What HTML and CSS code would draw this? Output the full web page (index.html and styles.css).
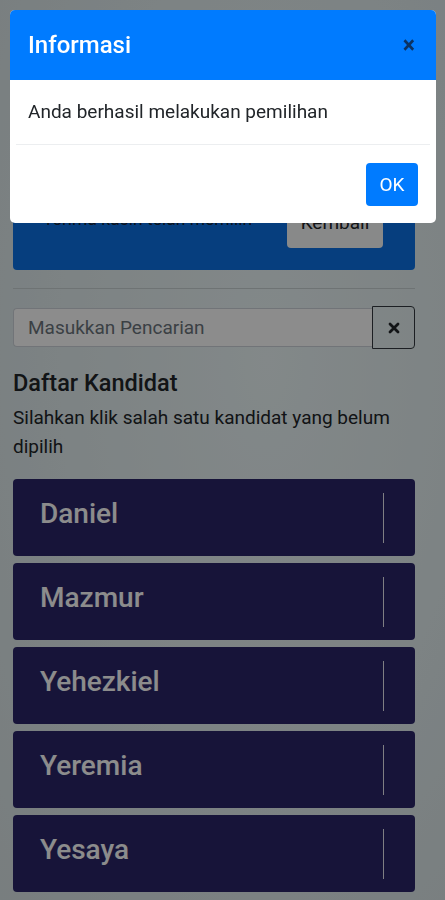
FILE: index.html
```html
<!DOCTYPE html>
<html>
<head>
	<meta charset="utf-8">
	<title>Pemilihan Kandidat</title>
	<link rel="stylesheet" href="styles.css">
</head>
<body>
<div class="page">
	<!-- kartu status pemilih (sebagian tertutup modal) -->
	<div class="status-card">
		<div class="status-row">
			<span class="status-text">Terima kasih telah memilih</span>
			<button class="btn-light" type="button">Kembali</button>
		</div>
	</div>
	<hr class="divider">

	<!-- pencarian -->
	<div class="search-group">
		<input class="search-input" type="text" placeholder="Masukkan Pencarian">
		<button class="btn-clear" type="button" aria-label="hapus">
			<svg width="12" height="12" viewBox="0 0 12 12"><path d="M2 2L10 10M10 2L2 10" stroke="#23272b" stroke-width="2.8" stroke-linecap="round"/></svg>
		</button>
	</div>

	<h3 class="list-title">Daftar Kandidat</h3>
	<p class="list-help">Silahkan klik salah satu kandidat yang belum dipilih</p>

	<div class="candidates">
		<div class="candidate"><span class="candidate-name">Daniel</span><span class="candidate-sep"></span></div>
		<div class="candidate"><span class="candidate-name">Mazmur</span><span class="candidate-sep"></span></div>
		<div class="candidate"><span class="candidate-name">Yehezkiel</span><span class="candidate-sep"></span></div>
		<div class="candidate"><span class="candidate-name">Yeremia</span><span class="candidate-sep"></span></div>
		<div class="candidate"><span class="candidate-name">Yesaya</span><span class="candidate-sep"></span></div>
	</div>
</div>

<!-- modal informasi -->
<div class="backdrop"></div>
<div class="modal">
	<div class="modal-header">
		<h5 class="modal-title">Informasi</h5>
		<button class="close" type="button">&times;</button>
	</div>
	<div class="modal-body">Anda berhasil melakukan pemilihan</div>
	<div class="modal-footer">
		<button class="btn-primary" type="button">OK</button>
	</div>
</div>
</body>
</html>
```

FILE: styles.css
```css
body {
	margin: 0;
	font-family: Roboto, "Noto Sans", "Liberation Sans", sans-serif;
	color: #212529;
	background: radial-gradient(ellipse at 60% 40%, #eef8f9 0%, #e2edef 60%, #dbe5e7 100%);
	min-height: 900px;
}
button {
	font-family: inherit;
}
.page {
	width: 402px;
	margin-left: 13px;
	padding-top: 30px;
}

/* kartu biru di atas */
.status-card {
	height: 240px;
	box-sizing: border-box;
	background: #0b72e6;
	border-radius: 4px;
	padding: 20px 32px 22px 30px;
	display: flex;
	flex-direction: column;
	justify-content: flex-end;
}
.status-row {
	display: flex;
	align-items: center;
	justify-content: space-between;
}
.status-text {
	font-size: 17.5px;
	color: #1a2433;
	margin-top: -7px;
}
.btn-light {
	width: 96px;
	height: 52px;
	border: 0;
	border-radius: 4px;
	background: #f8f9fa;
	color: #212529;
	font-size: 19px;
}
.divider {
	margin: 18px 0 0;
	border: 0;
	border-top: 1px solid #c9d2d4;
}

/* pencarian */
.search-group {
	display: flex;
	align-items: center;
	margin-top: 17px;
}
.search-input {
	width: 359px;
	height: 39px;
	box-sizing: border-box;
	border: 1px solid #ced4da;
	border-right: 0;
	border-radius: 4px 0 0 4px;
	padding: 0 14px;
	font: 19px Roboto, "Liberation Sans", sans-serif;
	background: #fff;
}
.search-input::placeholder {
	color: #6c757d;
}
.btn-clear {
	width: 43px;
	height: 43px;
	box-sizing: border-box;
	border: 1px solid #343a40;
	border-radius: 0 4px 4px 0;
	background: transparent;
	display: flex;
	align-items: center;
	justify-content: center;
	padding: 0;
}

.list-title {
	margin: 20px 0 0;
	font-size: 23.5px;
	font-weight: 500;
	line-height: 1.2;
}
.list-help {
	margin: 7px 0 0;
	font-size: 19px;
	line-height: 1.52;
}

/* daftar kandidat */
.candidates {
	margin-top: 17px;
	display: flex;
	flex-direction: column;
	gap: 7px;
}
.candidate {
	height: 77px;
	box-sizing: border-box;
	background: #2a2669;
	border-radius: 4px;
	padding: 14px 0;
	display: flex;
	justify-content: space-between;
}
.candidate-name {
	padding: 4px 0 0 27px;
	font-size: 28px;
	font-weight: 500;
	line-height: 1.2;
	color: #fff;
}
.candidate-sep {
	width: 1px;
	height: 50px;
	background: #e8e8ee;
	margin-right: 31px;
}

/* modal */
.backdrop {
	position: fixed;
	top: 0;
	left: 0;
	right: 0;
	bottom: 0;
	background: rgba(0, 0, 0, .45);
}
.modal {
	position: fixed;
	top: 10px;
	left: 10px;
	width: 426px;
	background: #fff;
	border-radius: 5px;
	overflow: hidden;
}
.modal-header {
	background: #007bff;
	padding: 17px 18px;
	display: flex;
	align-items: center;
	justify-content: space-between;
}
.modal-title {
	margin: 0;
	font-size: 24px;
	font-weight: 500;
	line-height: 1.5;
	color: #fff;
}
.close {
	border: 0;
	background: transparent;
	padding: 0 3px 0 0;
	font-size: 23px;
	font-weight: 700;
	line-height: 1;
	color: #0b3262;
}
.modal-body {
	padding: 19px 18px 18px;
	font-size: 19px;
	line-height: 1.42;
}
.modal-footer {
	margin: 0 6px;
	border-top: 1px solid #eceef0;
	padding: 18px 12px 17px;
	display: flex;
	justify-content: flex-end;
}
.btn-primary {
	width: 52px;
	height: 43px;
	border: 0;
	border-radius: 4px;
	background: #007bff;
	color: #fff;
	font-size: 19px;
}
```
